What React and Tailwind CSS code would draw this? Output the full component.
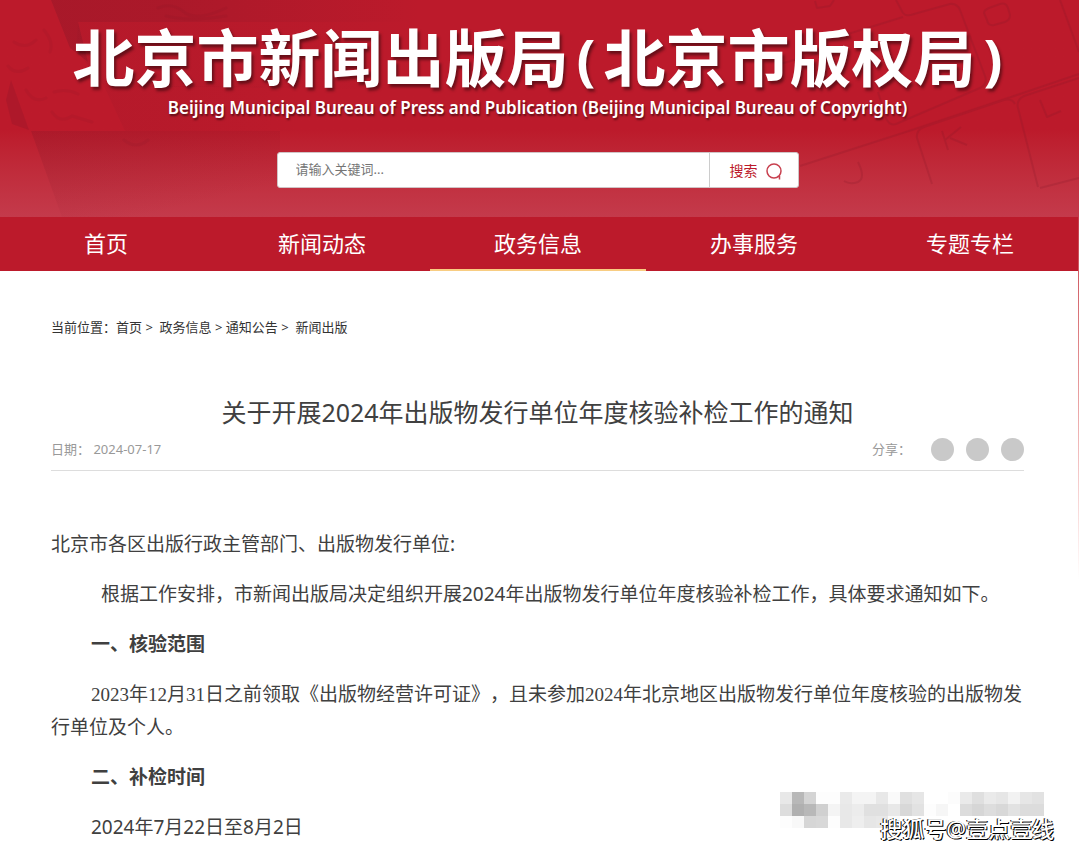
const navItems = ["首页", "新闻动态", "政务信息", "办事服务", "专题专栏"];

// grey levels of the blurred block behind the account name, one row per line
const mosaic = [
  "e8 b8 d4 fd fd ea f4 f4 e8 fa e0 e6 ff ff fc ea df ea e6 f2 e6 e2",
  "dd b0 b8 d0 f4 e8 ec e0 e0 e8 d8 e2 fd f6 ff dc d6 dd d8 e2 dc dc",
  "fd f8 d6 d8 fd e8 ee e6 e8 fa ff ff ff ff ff ff ff ff ff ff ff ff",
].map((row) => row.split(" "));

const HeaderArt = () => (
  <svg
    className="absolute inset-0 h-full w-full"
    viewBox="0 0 1079 217"
    preserveAspectRatio="none"
    aria-hidden="true"
  >
    <defs>
      <linearGradient id="fadeRight">
        <stop offset="0" stopColor="#7a1526" stopOpacity=".3" />
        <stop offset=".35" stopColor="#7a1526" stopOpacity=".25" />
        <stop offset="1" stopColor="#7a1526" stopOpacity="0" />
      </linearGradient>
      <linearGradient id="fadeDown" x1="0" y1="0" x2=".6" y2=".9">
        <stop offset="0" stopColor="#7a1526" stopOpacity=".24" />
        <stop offset="1" stopColor="#7a1526" stopOpacity="0" />
      </linearGradient>
    </defs>
    {/* relief wall on the left */}
    <path d="M51 0H420V22H78L88 62L70 48Z" fill="url(#fadeRight)" />
    <path d="M78 22H420V90L104 86L76 50Z" fill="url(#fadeRight)" opacity=".3" />
    <path d="M104 86H300V131H125Z" fill="url(#fadeRight)" opacity=".3" />
    <path d="M6 100L11 80L29 130L12 124Z" fill="#7a1526" opacity=".2" />
    <path d="M31 131H280V217H62Z" fill="url(#fadeDown)" />
    <g fill="none" stroke="#7a1526" strokeWidth="3" strokeLinecap="round" opacity=".1">
      <path d="M14 42Q26 50 36 40M44 30Q54 42 50 52M8 66Q16 76 28 68M26 90Q34 104 46 98M54 92Q66 88 78 94M52 112Q60 124 72 116L92 122" />
      <path d="M158 8Q172 2 184 12T226 8M166 16Q190 22 226 16M124 140Q136 150 148 140" />
    </g>
    {/* keyboard on the right */}
    <g fill="none" stroke="#7a1526" strokeWidth="2" strokeLinejoin="round" opacity=".18">
      <path d="M896 0L903 13Q906 17 914 14L950 4Q957 3 960 10L985 76Q988 84 980 88L896 124Q889 126 886 118L878 92" />
      <path d="M830 50L780 64M903 17L848 34M1060 0L1079 52M1079 74L1014 96L912 130L800 166" />
      <path d="M1038 187L1018 108Q1016 100 1024 96L1079 78M932 184L917 138Q916 130 924 127L1004 100Q1012 98 1015 104M1040 188L1079 178" />
      <path d="M815 1L817 8L830 6L834 0M989 8L1000 4Q1006 2 1008 8L1010 15Q1010 20 1005 22L994 25Q988 26 987 20L984 13Q984 10 989 8Z" />
      <path d="M1040 100L1047 117L1061 111M942 131L948 150M961 127L945 140M950 138L967 145M858 162Q866 178 858 182Q850 185 844 181" />
    </g>
  </svg>
);

const SiteHeader = () => (
  <header className="relative bg-linear-to-b from-[#bc1a2b] from-60% to-[#c43a4b] pt-6 pb-[29px]">
    <HeaderArt />
    <div className="relative flex flex-col items-center text-white">
      <h1 className="mr-1 flex items-center text-[62px] leading-[68px] font-bold whitespace-nowrap text-shadow-[2px_3px_3px_rgb(0_0_0/0.45)]">
        北京市新闻出版局
        <span className="mx-2 text-[56px]">(</span>
        北京市版权局
        <span className="ml-2 text-[56px]">)</span>
      </h1>
      <p className="mr-1 pt-1 text-[17px] leading-6 font-semibold text-shadow-[1px_2px_2px_rgb(0_0_0/0.5)]">
        Beijing Municipal Bureau of Press and Publication (Beijing Municipal
        Bureau of Copyright)
      </p>
      <form
        className="mt-8 mr-1 flex h-9 w-[522px] max-w-full overflow-hidden rounded-[3px] border border-[#d0c4c6] bg-white"
        onSubmit={(e) => e.preventDefault()}
      >
        <input
          type="text"
          aria-label="请输入关键词"
          placeholder="请输入关键词..."
          className="min-w-0 flex-1 px-[18px] text-[13px] text-[#333] outline-none placeholder:text-[#757575]"
        />
        <button
          type="submit"
          className="flex w-[89px] items-center justify-center gap-2 border-l border-[#ccc] pt-0.5 pl-1 text-sm text-[#bc1a2b]"
        >
          搜索
          <svg width="16" height="17" viewBox="0 0 16 17" fill="none" stroke="#c8404f" strokeWidth="1.5">
            <circle cx="8" cy="8" r="7" />
            <path d="M11.5 13.5H13.5V16.5" />
          </svg>
        </button>
      </form>
    </div>
  </header>
);

const Nav = () => (
  <nav className="-ml-0.5 grid grid-cols-5 bg-[#bc1a2b]">
    {navItems.map((item) => (
      <a
        key={item}
        href="#"
        className={`border-b-2 pt-1 pb-1 text-center text-[22px] leading-[44px] text-white ${
          item === "政务信息" ? "border-[#f8cd82]" : "border-transparent"
        }`}
      >
        {item}
      </a>
    ))}
  </nav>
);

const Breadcrumb = () => (
  <div className="flex pt-11 text-[13px] leading-6 whitespace-pre text-[#333]">
    <span>当前位置：</span>
    <a href="#">首页</a>
    <span>{" >  "}</span>
    <a href="#">政务信息</a>
    <span>{" > "}</span>
    <a href="#">通知公告</a>
    <span>{" >  "}</span>
    <a href="#">新闻出版</a>
  </div>
);

const Article = () => (
  <article>
    <h2 className="mt-[53px] text-center text-[25px] leading-10 text-[#404040]">
      关于开展2024年出版物发行单位年度核验补检工作的通知
    </h2>
    <div className="flex items-center justify-between border-b border-[#ddd] pt-1.5 pb-[9px] text-[13px] text-[#999]">
      <span className="whitespace-pre">日期：{" "}2024-07-17</span>
      <div className="flex items-center gap-3">
        <span className="mr-2">分享：</span>
        <button aria-label="微信" className="size-[23px] rounded-full bg-[#c9c9c9]" />
        <button aria-label="微博" className="size-[23px] rounded-full bg-[#c9c9c9]" />
        <button aria-label="QQ空间" className="size-[23px] rounded-full bg-[#c9c9c9]" />
      </div>
    </div>
    <div className="space-y-[17px] pt-[57px] text-[19px] leading-[33px] text-[#404040] [text-spacing-trim:space-all]">
      <p>北京市各区出版行政主管部门、出版物发行单位:</p>
      <p className="indent-[50px]">
        根据工作安排，市新闻出版局决定组织开展2024年出版物发行单位年度核验补检工作，具体要求通知如下。
      </p>
      <p className="indent-10 font-bold">一、核验范围</p>
      <p className="indent-10 font-['Liberation_Serif','Noto_Sans_CJK_SC',serif]">
        2023年12月31日之前领取《出版物经营许可证》，且未参加2024年北京地区出版物发行单位年度核验的出版物发行单位及个人。
      </p>
      <p className="indent-10 font-bold">二、补检时间</p>
      <p className="indent-10">2024年7月22日至8月2日</p>
    </div>
  </article>
);

const Watermark = () => (
  <div className="absolute top-[575px] right-6 flex flex-col items-end">
    <svg width="264" height="36" className="mr-2.5" shapeRendering="crispEdges" aria-hidden="true">
      {mosaic.map((row, y) =>
        row.map((c, x) => (
          <rect key={`${x}-${y}`} x={x * 12} y={y * 12} width="12" height="12" fill={`#${c}${c}${c}`} />
        ))
      )}
    </svg>
    <span className="-mt-3.5 text-[22px] leading-7 font-medium text-white text-shadow-[1px_1px_0_#000,-1px_0_0_#000]">
      搜狐号@壹点壹线
    </span>
  </div>
);

export default function App() {
  return (
    <div className="bg-linear-to-b from-[#c43a4b] from-[217px] to-white to-[580px] font-['Noto_Sans','Noto_Sans_CJK_SC',sans-serif]">
      <SiteHeader />
      <div className="relative mr-px min-h-[calc(100vh-217px)] bg-white">
        <Nav />
        <main className="pr-[54px] pb-2 pl-[51px]">
          <Breadcrumb />
          <Article />
        </main>
        <Watermark />
      </div>
    </div>
  );
}
